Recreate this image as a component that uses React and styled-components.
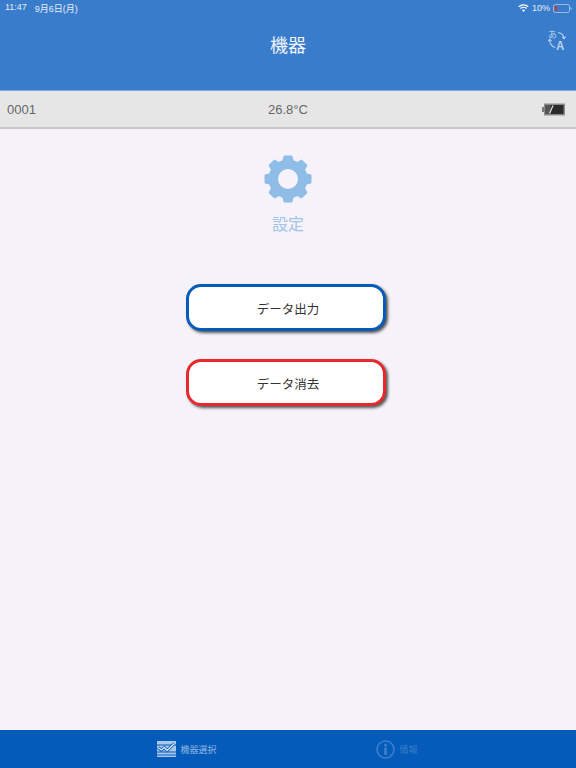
import React from 'react';
import styled, { createGlobalStyle } from 'styled-components';

const GlobalStyle = createGlobalStyle`
  html, body {
    margin: 0;
    padding: 0;
    height: 100%;
  }
  body {
    font-family: "Liberation Sans", "Noto Sans CJK JP", sans-serif;
    background: #f5f3f9;
  }
`;

const Page = styled.div`
  width: 576px;
  height: 768px;
  display: flex;
  flex-direction: column;
  overflow: hidden;
  background: #f5f3f9;
`;

const Header = styled.header`
  height: 91px;
  flex: none;
  box-sizing: border-box;
  position: relative;
  background: #397ccb;
  color: #f2f6fc;
  border-bottom: 1px solid #7ea8dc;
`;

const StatusBar = styled.div`
  height: 15px;
  padding: 1px 4px 0 5px;
  box-sizing: border-box;
  display: flex;
  align-items: center;
  justify-content: space-between;
  font-size: 9px;
  color: #e6eef8;
`;

const StatusLeft = styled.div`
  display: flex;
  gap: 8px;
`;

const StatusRight = styled.div`
  display: flex;
  align-items: center;
  gap: 3px;
`;

const Title = styled.h1`
  margin: 15px 0 0;
  font-size: 18px;
  font-weight: 400;
  line-height: 33px;
  text-align: center;
`;

const TranslateButton = styled.div`
  position: absolute;
  top: 25px;
  right: 8px;
  width: 22px;
  height: 30px;
  color: #b8d0ec;
`;

const DeviceBar = styled.div`
  height: 38px;
  flex: none;
  box-sizing: border-box;
  padding: 0 7px;
  display: grid;
  grid-template-columns: 1fr auto 1fr;
  align-items: center;
  background: #e6e6e6;
  border-bottom: 2px solid #c8c8c8;
  color: #666;
  font-size: 13px;
`;

const BatterySlot = styled.div`
  justify-self: end;
  display: flex;
  margin-right: 4px;
`;

const Content = styled.main`
  flex: 1;
  display: flex;
  flex-direction: column;
  align-items: center;
  padding-top: 25px;
`;

const GearWrap = styled.div`
  display: flex;
  filter: blur(0.4px);
`;

const SectionLabel = styled.div`
  margin-top: 10px;
  font-size: 16px;
  line-height: 22px;
  color: #a0c4e9;
`;

const ActionList = styled.div`
  margin: 48px 4px 0 0;
  display: flex;
  flex-direction: column;
  gap: 28px;
`;

const ActionButton = styled.button`
  width: 200px;
  height: 47px;
  box-sizing: border-box;
  padding: 2px 0 0 4px;
  background: #fff;
  border: 3px solid ${({ $color }) => $color};
  border-radius: 15px;
  box-shadow: 2px 2px 3px rgba(0, 0, 0, 0.65);
  color: #333;
  font-family: inherit;
  font-size: 12.5px;
`;

const TabBar = styled.nav`
  height: 38px;
  flex: none;
  box-sizing: border-box;
  padding-left: 8px;
  display: grid;
  grid-template-columns: 210px 210px;
  justify-content: center;
  background: #045bb9;
`;

const Tab = styled.div`
  display: flex;
  align-items: center;
  justify-content: center;
  gap: 4px;
  color: ${({ $active }) => ($active ? '#8fb6e2' : '#3d7fca')};
  font-size: 9px;
`;

const IconText = styled.text`
  font-family: "Noto Sans CJK JP", "Liberation Sans", sans-serif;
  fill: currentColor;
  font-size: ${({ $size }) => $size}px;
  font-weight: ${({ $weight }) => $weight || 400};
`;

const WifiIcon = () => (
  <svg width="11" height="8" viewBox="0 0 11 8" fill="none" stroke="#fff" strokeWidth="1.3">
    <path d="M.8 2.8a6.8 6.8 0 0 1 9.4 0" />
    <path d="M2.5 4.5a4.3 4.3 0 0 1 6 0" />
    <path d="M5.5 8 3.9 6.1a2.4 2.4 0 0 1 3.2 0z" fill="#fff" stroke="none" />
  </svg>
);

const StatusBattery = () => (
  <svg width="19" height="9" viewBox="0 0 19 9">
    <rect x=".5" y=".5" width="16" height="8" rx="2" fill="none" stroke="#9dbde3" />
    <rect x="2" y="2" width="2" height="5" fill="#e0312f" />
    <path d="M17.5 3v3c.8 0 1.2-.6 1.2-1.5S18.3 3 17.5 3z" fill="#9dbde3" />
  </svg>
);

// drawn on a 22x30 box, the marks themselves sit at about 18x22 in the middle
const TranslateIcon = () => (
  <svg width="22" height="30" viewBox="-2 -4 22 30" fill="none">
    <IconText x="0" y="9" $size={9}>あ</IconText>
    <IconText x="8.500" y="20.500" $size={11.500} $weight={700}>A</IconText>
    <g stroke="currentColor" strokeWidth="1.2">
      <path d="M10 3.500c3.500.6 5.800 2.800 6 5.800" />
      <path d="M14.200 7.800l1.800 1.800 1.700-2" />
      <path d="M1.800 10.500c-.5 3.800 2 7 5.500 8" />
      <path d="M.2 12.200 1.800 10.300l1.800 1.800" />
    </g>
  </svg>
);

const DeviceBattery = () => (
  <svg width="23" height="13" viewBox="0 0 23 13">
    <rect x="0" y="4" width="2.500" height="5" fill="#777" />
    <rect x="2" y=".5" width="21" height="12" fill="#8a8a8a" />
    <rect x="3.500" y="2" width="18" height="9" fill="#2b2b2b" />
    <rect x="3.500" y="2" width="5" height="9" fill="#555" />
    <path d="M7.500 10.500 11 2.500" stroke="#e6e6e6" strokeWidth="1.200" />
  </svg>
);

const GearIcon = () => {
  const teeth = Array.from({ length: 8 }, (_, i) => i * 45);
  return (
    <svg width="50" height="50" viewBox="0 0 50 50">
      <g fill="#8fbde8" stroke="#8fbde8" strokeWidth="2" strokeLinejoin="round">
        {teeth.map((angle) => (
          <path key={angle} d="M21.500 2.500h7l2 8h-11z" transform={`rotate(${angle} 25 25)`} />
        ))}
      </g>
      <circle cx="25" cy="25" r="14.750" fill="none" stroke="#8fbde8" strokeWidth="9.500" />
    </svg>
  );
};

const ChecklistIcon = () => (
  <svg width="19" height="16" viewBox="0 0 19 16" fill="none">
    <rect x="0" y="0" width="19" height="3.500" fill="#a9c8eb" />
    <rect x="0" y="4.500" width="19" height="6" fill="#a9c8eb" />
    <rect x="0" y="11.500" width="19" height="2" fill="#a9c8eb" />
    <rect x="0" y="14.500" width="19" height="1.500" fill="#a9c8eb" />
    <path d="M1 6.500 4.500 9 7.500 6.500 10 9.500 17.500 2.500" stroke="#045bb9" strokeWidth="3" />
    <path d="M1 6.500 4.500 9 7.500 6.500 10 9.500 17.500 2.500" stroke="#dce9f7" strokeWidth="1.300" />
  </svg>
);

const InfoIcon = () => (
  <svg width="19" height="19" viewBox="0 0 19 19">
    <circle cx="9.500" cy="9.500" r="8.500" fill="none" stroke="#3d7fca" strokeWidth="1.600" />
    <circle cx="9.500" cy="5" r="1.500" fill="#3d7fca" />
    <rect x="8.200" y="7.500" width="2.600" height="7.500" fill="#3d7fca" />
  </svg>
);

const App = () => (
  <>
    <GlobalStyle />
    <Page>
      <Header>
        <StatusBar>
          <StatusLeft>
            <span>11:47</span>
            <span>9月6日(月)</span>
          </StatusLeft>
          <StatusRight>
            <WifiIcon />
            <span>10%</span>
            <StatusBattery />
          </StatusRight>
        </StatusBar>
        <Title>機器</Title>
        <TranslateButton>
          <TranslateIcon />
        </TranslateButton>
      </Header>
      <DeviceBar>
        <span>0001</span>
        <span>26.8°C</span>
        <BatterySlot>
          <DeviceBattery />
        </BatterySlot>
      </DeviceBar>
      <Content>
        <GearWrap>
          <GearIcon />
        </GearWrap>
        <SectionLabel>設定</SectionLabel>
        <ActionList>
          <ActionButton $color="#045bb9">データ出力</ActionButton>
          <ActionButton $color="#e8282c">データ消去</ActionButton>
        </ActionList>
      </Content>
      <TabBar>
        <Tab $active>
          <ChecklistIcon />
          <span>機器選択</span>
        </Tab>
        <Tab>
          <InfoIcon />
          <span>情報</span>
        </Tab>
      </TabBar>
    </Page>
  </>
);

export default App;
